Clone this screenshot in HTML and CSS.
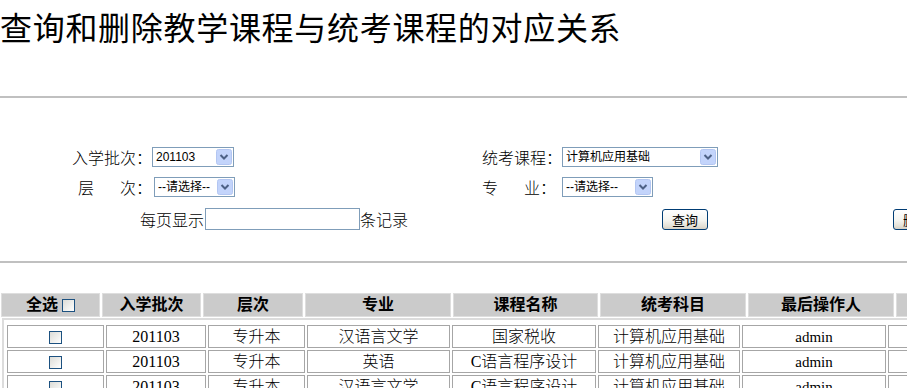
FILE: index.html
```html
<!DOCTYPE html>
<html lang="zh-CN">
<head>
<meta charset="utf-8">
<title>查询和删除教学课程与统考课程的对应关系</title>
<link rel="stylesheet" href="styles.css">
</head>
<body>
<h1 class="title">查询和删除教学课程与统考课程的对应关系</h1>
<hr class="rule">
<form class="filters">
  <div class="grid">
    <label class="lbl lbl-left">入学批次：</label>
    <div class="sel w-batch">
      <select class="native"><option>201103</option></select>
      <span class="arrow"><svg width="16" height="16" viewBox="0 0 16 16"><rect x="0.5" y="0.5" width="15" height="15" rx="2" fill="#c3d4fb" stroke="#b3c6f2"/><path d="M4.5 6 L8 9.5 L11.5 6" fill="none" stroke="#4d6185" stroke-width="2"/></svg></span>
    </div>
    <label class="lbl lbl-right">统考课程：</label>
    <div class="sel w-course">
      <select class="native"><option>计算机应用基础</option></select>
      <span class="arrow"><svg width="16" height="16" viewBox="0 0 16 16"><rect x="0.5" y="0.5" width="15" height="15" rx="2" fill="#c3d4fb" stroke="#b3c6f2"/><path d="M4.5 6 L8 9.5 L11.5 6" fill="none" stroke="#4d6185" stroke-width="2"/></svg></span>
    </div>

    <label class="lbl lbl-left">层<span class="sp"></span>次：</label>
    <div class="sel w-level shift">
      <select class="native"><option>--请选择--</option></select>
      <span class="arrow"><svg width="16" height="16" viewBox="0 0 16 16"><rect x="0.5" y="0.5" width="15" height="15" rx="2" fill="#c3d4fb" stroke="#b3c6f2"/><path d="M4.5 6 L8 9.5 L11.5 6" fill="none" stroke="#4d6185" stroke-width="2"/></svg></span>
    </div>
    <label class="lbl lbl-right">专<span class="sp"></span>业：</label>
    <div class="sel w-major">
      <select class="native"><option>--请选择--</option></select>
      <span class="arrow"><svg width="16" height="16" viewBox="0 0 16 16"><rect x="0.5" y="0.5" width="15" height="15" rx="2" fill="#c3d4fb" stroke="#b3c6f2"/><path d="M4.5 6 L8 9.5 L11.5 6" fill="none" stroke="#4d6185" stroke-width="2"/></svg></span>
    </div>
  </div>
  <div class="pager">
    <span class="lbl">每页显示</span><input class="txt" type="text"><span class="lbl">条记录</span>
    <button type="button" class="btn btn-query">查询</button>
    <button type="button" class="btn btn-delete">删除</button>
  </div>
</form>
<hr class="rule rule2">
<table class="head">
  <tr>
    <th class="h1">全选<span class="cb cb-head"></span></th>
    <th class="h2">入学批次</th>
    <th class="h3">层次</th>
    <th class="h4">专业</th>
    <th class="h5">课程名称</th>
    <th class="h6">统考科目</th>
    <th class="h7">最后操作人</th>
    <th class="h8"></th>
  </tr>
</table>
<div class="rows-wrap">
  <table class="rows">
    <tr>
      <td class="c1"><span class="cb"></span></td>
      <td class="c2">201103</td>
      <td class="c3">专升本</td>
      <td class="c4">汉语言文学</td>
      <td class="c5">国家税收</td>
      <td class="c6">计算机应用基础</td>
      <td class="c7 small">admin</td>
      <td class="c8"></td>
    </tr>
    <tr>
      <td class="c1"><span class="cb"></span></td>
      <td class="c2">201103</td>
      <td class="c3">专升本</td>
      <td class="c4">英语</td>
      <td class="c5">C语言程序设计</td>
      <td class="c6">计算机应用基础</td>
      <td class="c7 small">admin</td>
      <td class="c8"></td>
    </tr>
    <tr>
      <td class="c1"><span class="cb"></span></td>
      <td class="c2">201103</td>
      <td class="c3">专升本</td>
      <td class="c4">汉语言文学</td>
      <td class="c5">C语言程序设计</td>
      <td class="c6">计算机应用基础</td>
      <td class="c7 small">admin</td>
      <td class="c8"></td>
    </tr>
  </table>
</div>
</body>
</html>
```
FILE: styles.css
```css
html, body {
  margin: 0;
  padding: 0;
  overflow: hidden;
  background: #ffffff;
  color: #000000;
}

body {
  font-family: "Noto Sans CJK SC", sans-serif;
  width: 907px;
}

.title {
  margin: 0;
  padding-top: 6px;
  font-size: 32px;
  line-height: 40px;
  font-weight: normal;
  letter-spacing: 0.7px;
  white-space: nowrap;
  font-family: "Noto Sans CJK SC", sans-serif;
}

.rule {
  border: 0;
  border-top: 2px solid #c0c0c0;
  height: 0;
  margin: 50px 0 0;
}

.rule2 {
  margin-top: 31px;
}

.filters {
  margin: 0;
  padding-top: 49px;
}

.grid {
  display: grid;
  grid-template-columns: 72px 80px 330px 80px 1fr;
  grid-auto-rows: 20px;
  row-gap: 10px;
  align-items: center;
}

.lbl {
  font-size: 16px;
  line-height: 20px;
  white-space: nowrap;
  font-weight: 300;
  flex-shrink: 0;
}

.lbl-left {
  grid-column: 2;
  text-align: right;
}

.lbl-right {
  grid-column: 4;
  text-align: left;
}

.sp {
  display: inline-block;
  width: 26px;
}

.sel {
  position: relative;
  height: 20px;
  box-sizing: border-box;
}

.w-batch { width: 82px; }
.w-level { width: 81px; }
.w-course { width: 156px; }
.w-major { width: 91px; }
.shift { margin-left: 2px; }

.native {
  appearance: none;
  -webkit-appearance: none;
  display: block;
  width: 100%;
  height: 20px;
  box-sizing: border-box;
  margin: 0;
  border: 1px solid #7f9db9;
  border-radius: 0;
  background: #ffffff;
  padding: 0 0 0 3px;
  font-family: "Liberation Sans", "Noto Sans CJK SC", sans-serif;
  font-size: 12px;
  color: #000000;
  line-height: 18px;
}

.arrow {
  position: absolute;
  top: 2px;
  right: 2px;
  width: 16px;
  height: 16px;
  display: block;
  pointer-events: none;
}

.arrow svg {
  display: block;
}

.pager {
  display: flex;
  align-items: center;
  margin-top: 11px;
  padding-left: 140px;
  height: 22px;
}

.txt {
  flex-shrink: 0;
  width: 155px;
  height: 22px;
  box-sizing: border-box;
  margin: 0 0 0 1px;
  border: 1px solid #7f9db9;
  padding: 0 2px;
  background: #ffffff;
}

.btn {
  flex-shrink: 0;
  width: 46px;
  height: 21px;
  box-sizing: border-box;
  padding: 0;
  border: 1px solid #003c74;
  border-radius: 3px;
  background: linear-gradient(#ffffff 0%, #f4f4f0 55%, #e3e0d6 85%, #d6d0c5 100%);
  font-family: "Noto Sans CJK SC", sans-serif;
  font-size: 13px;
  line-height: 19px;
  color: #000000;
}

.btn-query { margin-left: 254px; }
.btn-delete { margin-left: 185px; }

.head {
  margin: 30px 0 0 -1px;
  border-collapse: separate;
  border-spacing: 2px 0;
  table-layout: fixed;
  width: 1019px;
}

.head th {
  box-sizing: border-box;
  height: 24px;
  padding: 0;
  background: #cbcbcb;
  border: 1px solid #dedede;
  font-family: "Liberation Serif", "Noto Sans CJK SC", serif;
  font-size: 16px;
  font-weight: bold;
  line-height: 20px;
  text-align: center;
  white-space: nowrap;
}

.h1 { width: 99px; }
.h2 { width: 99px; }
.h3 { width: 100px; }
.h4 { width: 146px; }
.h5 { width: 145px; }
.h6 { width: 146px; }
.h7 { width: 146px; }
.h8 { width: 120px; }

.cb {
  display: inline-block;
  width: 13px;
  height: 13px;
  box-sizing: border-box;
  border: 1px solid #1c5180;
  background: linear-gradient(135deg, #dcdcd7 0%, #f4f4f2 70%, #ffffff 100%);
  vertical-align: middle;
}

.cb-head {
  margin-left: 4px;
  position: relative;
  top: -1px;
}

.rows-wrap {
  margin: 1px 0 0 2px;
  border-top: 2px solid #dcdcdc;
  border-left: 2px solid #dcdcdc;
  padding: 5px 0 0 3px;
}

.rows {
  border-collapse: separate;
  border-spacing: 2px 2px;
  margin: -2px 0 0 -2px;
  table-layout: fixed;
  width: 1005px;
}

.rows td {
  box-sizing: border-box;
  height: 23px;
  padding: 0;
  border: 1px solid #a6a6a6;
  font-family: "Liberation Serif", "Noto Sans CJK SC", serif;
  font-size: 16px;
  font-weight: 300;
  line-height: 20px;
  text-align: center;
  white-space: nowrap;
}

.rows td.small {
  font-size: 15px;
}

.c1 { width: 97px; }
.c2 { width: 100px; }
.c3 { width: 97px; }
.c4 { width: 143px; }
.c5 { width: 144px; }
.c6 { width: 142px; }
.c7 { width: 144px; }
.c8 { width: 120px; }
```
